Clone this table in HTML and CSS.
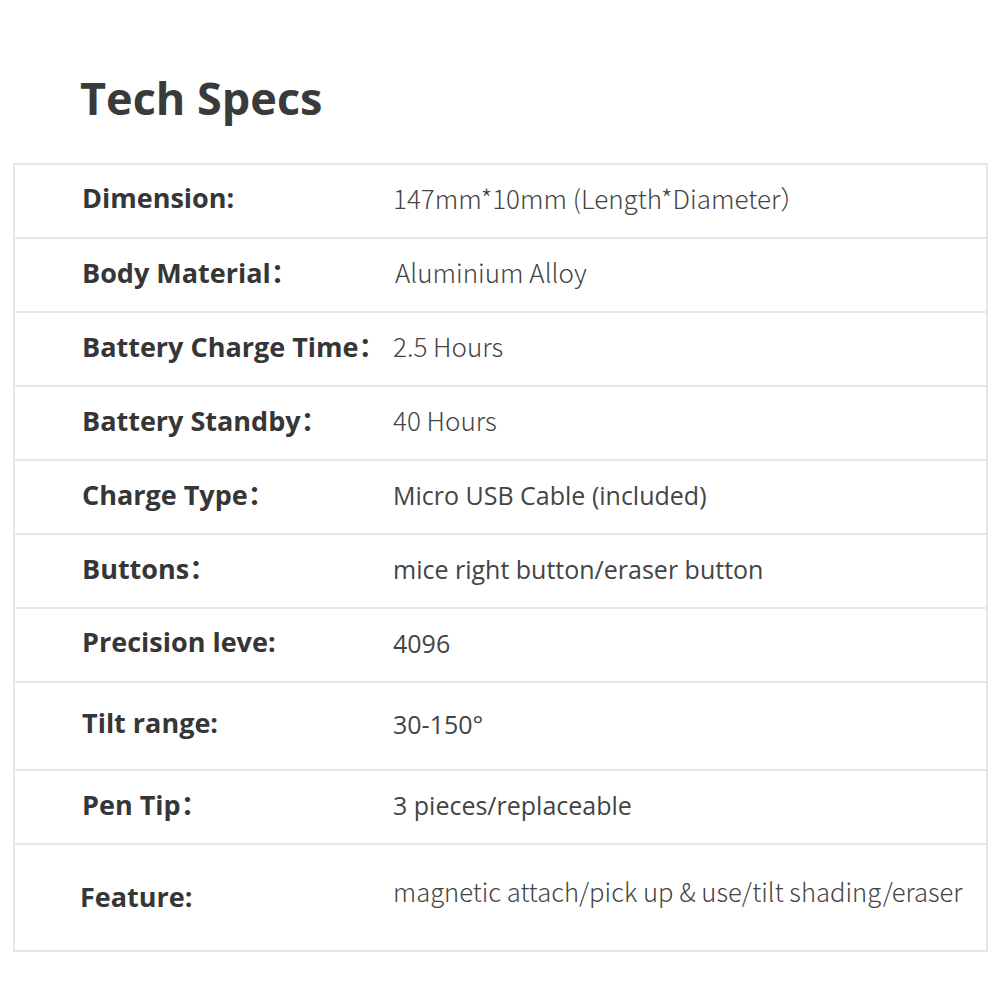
FILE: index.html
```html
<!DOCTYPE html>
<html>
<head>
<meta charset="utf-8">
<link rel="stylesheet" href="styles.css">
</head>
<body>
<main class="page">
  <h1 class="title">Tech Specs</h1>
  <div class="specs">
    <div class="row">
      <div class="label">Dimension:</div>
      <div class="value cjk">147mm*10mm (Length*Diameter）</div>
    </div>
    <div class="row">
      <div class="label">Body Material：</div>
      <div class="value cjk shift">Aluminium Alloy</div>
    </div>
    <div class="row">
      <div class="label">Battery Charge Time：</div>
      <div class="value cjk">2.5 Hours</div>
    </div>
    <div class="row">
      <div class="label">Battery Standby：</div>
      <div class="value cjk">40 Hours</div>
    </div>
    <div class="row">
      <div class="label">Charge Type：</div>
      <div class="value">Micro USB Cable (included)</div>
    </div>
    <div class="row">
      <div class="label">Buttons：</div>
      <div class="value">mice right button/eraser button</div>
    </div>
    <div class="row">
      <div class="label">Precision leve:</div>
      <div class="value">4096</div>
    </div>
    <div class="row tall">
      <div class="label">Tilt range:</div>
      <div class="value">30-150°</div>
    </div>
    <div class="row">
      <div class="label">Pen Tip：</div>
      <div class="value">3 pieces/replaceable</div>
    </div>
    <div class="row last">
      <div class="label narrow">Feature:</div>
      <div class="value cjk wide">magnetic attach/pick up &amp; use/tilt shading/eraser</div>
    </div>
  </div>
</main>
</body>
</html>
```

FILE: styles.css
```css
html, body {
  margin: 0;
  padding: 0;
  background: #ffffff;
}

body {
  font-family: "Open Sans", "Noto Sans CJK SC", sans-serif;
  color: #333333;
}

.page {
  padding: 0 13px 0 13px;
  width: 975px;
}

.title {
  margin: 0;
  padding: 68px 0 0 67px;
  height: 163px;
  box-sizing: border-box;
  font-size: 45px;
  line-height: 60px;
  font-weight: 700;
  color: #3a3a3a;
}

.specs {
  border: 2px solid #e6e6e6;
  border-bottom: none;
}

.row {
  display: grid;
  grid-template-columns: 378px 1fr;
  align-items: center;
  height: 74px;
  border-bottom: 2px solid #e6e6e6;
  box-sizing: border-box;
}

.row.tall {
  height: 88px;
}

.row.last {
  height: 107px;
}

.label {
  padding-left: 67px;
  padding-bottom: 7px;
  font-size: 27px;
  font-weight: 700;
  color: #363636;
  white-space: nowrap;
}

.label.narrow {
  padding-left: 65px;
  padding-bottom: 2px;
}

.value {
  padding-bottom: 5px;
  font-size: 25px;
  color: #444444;
  white-space: nowrap;
}

.value.cjk {
  font-family: "Noto Sans CJK SC", sans-serif;
  font-weight: 300;
  font-size: 26px;
  padding-bottom: 8px;
}

.value.cjk.wide {
  font-size: 25.6px;
  padding-bottom: 14px;
}

.value.shift {
  padding-left: 2px;
}
```
